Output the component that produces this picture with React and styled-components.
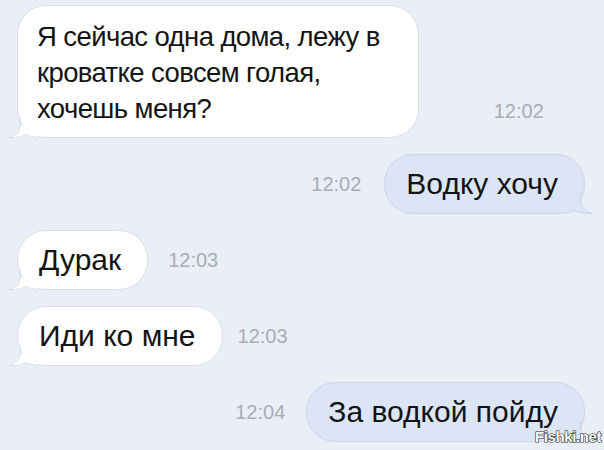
import React from 'react'
import styled, { createGlobalStyle } from 'styled-components'

const Global = createGlobalStyle`
  html, body {
    margin: 0;
    padding: 0;
    background: #eaeef6;
  }
  body {
    font-family: 'Liberation Sans', Arial, sans-serif;
  }
`

const messages = [
  { id: 1, out: false, text: 'Я сейчас одна дома, лежу в\nкроватке совсем голая,\nхочешь меня?', time: '12:02', gap: 75, multi: true },
  { id: 2, out: true, text: 'Водку хочу', time: '12:02', gap: 23 },
  { id: 3, out: false, text: 'Дурак', time: '12:03', gap: 20 },
  { id: 4, out: false, text: 'Иди ко мне', time: '12:03', gap: 15 },
  { id: 5, out: true, text: 'За водкой пойду', time: '12:04', gap: 21 }
]

const Screen = styled.div`
  width: 604px;
  height: 450px;
  overflow: hidden;
  box-sizing: border-box;
  padding: 5px 19px 0 17px;
  display: flex;
  flex-direction: column;
  gap: 16px;
  position: relative;
  background: #eaeef6;
`

const Row = styled.div`
  display: flex;
  flex-direction: ${p => (p.$out ? 'row-reverse' : 'row')};
  align-items: ${p => (p.$multi ? 'flex-end' : 'center')};
  gap: ${p => p.$gap}px;
`

const Bubble = styled.div`
  position: relative;
  background: ${p => (p.$out ? '#dbe5f6' : '#ffffff')};
  border: 1px solid ${p => (p.$out ? '#cbd5e6' : '#dadfe7')};
  border-radius: 29px;
  padding: ${p => (p.$multi ? '13px 38px 10px 19px' : '11px 26px 11px 21px')};
  font-size: ${p => (p.$multi ? '27.5px' : '30px')};
  letter-spacing: ${p => (p.$multi ? '-0.6px' : '0')};
  line-height: 36px;
  color: #141414;
  white-space: pre-line;
`

const Tail = styled.svg`
  position: absolute;
  bottom: -1px;
  ${p => (p.$out ? 'right: -9px;' : 'left: -10px;')}
  width: 30px;
  height: 24px;
`

const Time = styled.span`
  font-size: 20px;
  color: #a8acb4;
  margin-bottom: ${p => (p.$multi ? '15px' : '0')};
`

const Watermark = styled.div`
  position: absolute;
  right: 3px;
  bottom: 5px;
  font-size: 15px;
  font-weight: bold;
  letter-spacing: -0.4px;
  color: #ffffff;
  -webkit-text-stroke: 1.2px #1c1c1c;
  paint-order: stroke fill;
`

const BubbleTail = ({ out }) => (
  <Tail $out={out} viewBox='0 0 30 24'>
    <g transform={out ? 'translate(30 0) scale(-1 1)' : undefined}>
      <path
        d='M30 1 C24 8 15 12 12 12 C11 17 6 22 1 24 C7 24.5 14 23 19 21 C21 22 24 23 30 23.5 Z'
        fill={out ? '#dbe5f6' : '#ffffff'}
      />
      <path
        d='M12 3 C12.5 10 12 14 11 17 C9 20 5 22.5 1 23.5 C7 24 14 22.5 19 20.5 C21 21.5 24 23 30 23.5'
        fill='none'
        stroke={out ? '#cbd5e6' : '#dadfe7'}
        strokeWidth='1'
      />
    </g>
  </Tail>
)

const App = () => (
  <>
    <Global />
    <Screen>
      {messages.map(m => (
        <Row key={m.id} $out={m.out} $gap={m.gap} $multi={m.multi}>
          <Bubble $out={m.out} $multi={m.multi}>
            {m.text}
            <BubbleTail out={m.out} />
          </Bubble>
          <Time $multi={m.multi}>{m.time}</Time>
        </Row>
      ))}
      <Watermark>Fishki.net</Watermark>
    </Screen>
  </>
)

export default App
